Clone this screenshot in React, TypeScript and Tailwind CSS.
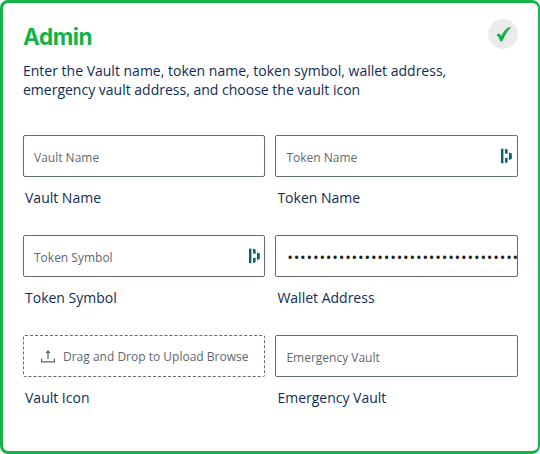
import type { ReactNode } from "react";

function Field({ label, children }: { label: string; children: ReactNode }) {
  return (
    <div className="flex h-[100px] min-w-0 flex-col">
      {children}
      <span className="mt-[11px] pl-[2px] text-[14px] leading-[20px] text-[#0f2c57]">{label}</span>
    </div>
  );
}

function Box({ children }: { children: ReactNode }) {
  return (
    <div className="flex h-[42px] items-center overflow-hidden rounded-[2px] border border-[#636b78] pr-[4.5px] pl-[10px] text-[12px] text-[#5e6874]">
      {children}
    </div>
  );
}

function FillIcon() {
  return (
    <svg className="ml-auto h-[16px] w-[12px] shrink-0" viewBox="0 0 12 16" fill="#0e6070">
      <path d="M1 0.8 L3.4 0.4 V15.4 L1 15Z" />
      <path d="M5 0.8 L7.6 1.5 V6 L5 5.2Z" />
      <path d="M5 10.3 L7.6 9.5 V14.2 L5 15Z" />
      <path d="M9 4.5 L11.8 5.4 V11 L9 11.9Z" />
    </svg>
  );
}

export default function App() {
  return (
    <div className="h-[454px] w-[540px] bg-white font-['Open_Sans','Noto_Sans',sans-serif]">
      <main className="h-full rounded-[8px] border-[3px] border-r-2 border-[#12b347] pt-[16px] pr-[20px] pl-[20px]">
        <header className="flex h-[42px] justify-between">
          <h1 className="pt-[2px] font-['Inter',sans-serif] text-[22.5px] leading-[32px] font-bold tracking-[-0.4px] text-[#12b347]">
            Admin
          </h1>
          <div className="flex size-[30px] items-center justify-center rounded-full bg-[#ebebeb]">
            <svg className="ml-[2px] h-[15px] w-[16px]" viewBox="0 0 16 16" fill="#12b347">
              <path d="M0 8.6 C1.2 7.4 3 6.8 3.8 7.6 C4.4 8.2 4.7 9 5 9.7 C7.2 5.4 9.4 2.3 11.6 1 C12.6 .4 14 .3 15.6 .4 C11.7 4 9 8.6 6.8 14.1 C6 15.1 5 15.5 3.9 15.4 C3.1 12.3 2 10 0 8.6Z" />
            </svg>
          </div>
        </header>
        <p className="text-[14px] leading-[19px] text-[#0f2c57]">
          Enter the Vault name, token name, token symbol, wallet address,
          <br />
          emergency vault address, and choose the vault icon
        </p>
        <div className="mt-[36px] grid grid-cols-[242.4px_242.6px] gap-x-[10px]">
          <Field label="Vault Name">
            <Box><span className="pt-[3px]">Vault Name</span></Box>
          </Field>
          <Field label="Token Name">
            <Box><span className="pt-[3px]">Token Name</span><FillIcon /></Box>
          </Field>
          <Field label="Token Symbol">
            <Box><span className="pt-[3px]">Token Symbol</span><FillIcon /></Box>
          </Field>
          <Field label="Wallet Address">
            <Box>
              <span className="pt-[3px] pl-[0.8px] text-[15px] tracking-[0.8px] whitespace-nowrap text-[#1c1c1c]">
                ••••••••••••••••••••••••••••••••••••
              </span>
            </Box>
          </Field>
          <Field label="Vault Icon">
            <div className="flex h-[42px] items-center rounded-[2px] border border-dashed border-[#636b78] pl-[17px] text-[12px] text-[#5e6874]">
              <svg className="mr-[8px] h-[14px] w-[14px]" viewBox="0 0 14 14" fill="none" stroke="#5e6874" strokeWidth="1.2">
                <path d="M.6 9.5 V12.9 H13.4 V9.5 M7 10 V2" />
                <path d="M4.8 4 L7 1.2 L9.2 4Z" fill="#5e6874" strokeWidth=".4" />
              </svg>
              <span className="pt-[2px]">Drag and Drop to Upload Browse</span>
            </div>
          </Field>
          <Field label="Emergency Vault">
            <Box><span className="pt-[3px]">Emergency Vault</span></Box>
          </Field>
        </div>
      </main>
    </div>
  );
}
